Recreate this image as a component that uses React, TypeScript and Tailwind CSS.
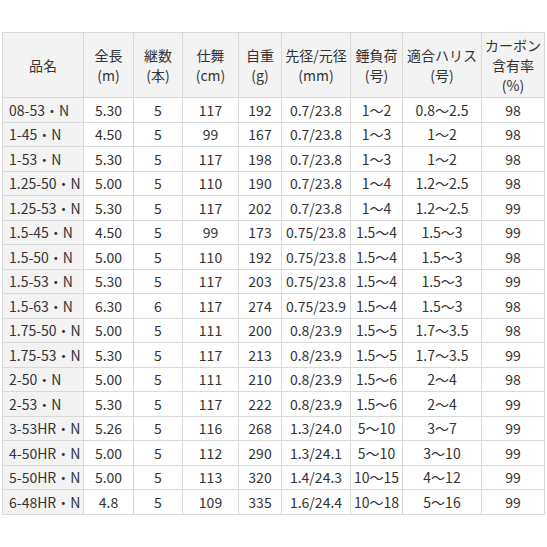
const headers: string[][] = [
  ["品名"],
  ["全長", "(m)"],
  ["継数", "(本)"],
  ["仕舞", "(cm)"],
  ["自重", "(g)"],
  ["先径/元径", "(mm)"],
  ["錘負荷", "(号)"],
  ["適合ハリス", "(号)"],
  ["カーボン", "含有率", "(%)"],
];

const widths = [81, 50, 49, 56, 43, 69, 52, 79, 63];

const rows: string[][] = [
  ["08-53・N", "5.30", "5", "117", "192", "0.7/23.8", "1～2", "0.8～2.5", "98"],
  ["1-45・N", "4.50", "5", "99", "167", "0.7/23.8", "1～3", "1～2", "98"],
  ["1-53・N", "5.30", "5", "117", "198", "0.7/23.8", "1～3", "1～2", "98"],
  ["1.25-50・N", "5.00", "5", "110", "190", "0.7/23.8", "1～4", "1.2～2.5", "98"],
  ["1.25-53・N", "5.30", "5", "117", "202", "0.7/23.8", "1～4", "1.2～2.5", "99"],
  ["1.5-45・N", "4.50", "5", "99", "173", "0.75/23.8", "1.5～4", "1.5～3", "99"],
  ["1.5-50・N", "5.00", "5", "110", "192", "0.75/23.8", "1.5～4", "1.5～3", "98"],
  ["1.5-53・N", "5.30", "5", "117", "203", "0.75/23.8", "1.5～4", "1.5～3", "99"],
  ["1.5-63・N", "6.30", "6", "117", "274", "0.75/23.9", "1.5～4", "1.5～3", "98"],
  ["1.75-50・N", "5.00", "5", "111", "200", "0.8/23.9", "1.5～5", "1.7～3.5", "98"],
  ["1.75-53・N", "5.30", "5", "117", "213", "0.8/23.9", "1.5～5", "1.7～3.5", "99"],
  ["2-50・N", "5.00", "5", "111", "210", "0.8/23.9", "1.5～6", "2～4", "98"],
  ["2-53・N", "5.30", "5", "117", "222", "0.8/23.9", "1.5～6", "2～4", "99"],
  ["3-53HR・N", "5.26", "5", "116", "268", "1.3/24.0", "5～10", "3～7", "99"],
  ["4-50HR・N", "5.00", "5", "112", "290", "1.3/24.1", "5～10", "3～10", "99"],
  ["5-50HR・N", "5.00", "5", "113", "320", "1.4/24.3", "10～15", "4～12", "99"],
  ["6-48HR・N", "4.8", "5", "109", "335", "1.6/24.4", "10～18", "5～16", "99"],
];

export default function App() {
  return (
    <div className="h-[547px] w-[547px] bg-white pl-[2px] pt-[32px] font-['Noto_Sans_CJK_JP',sans-serif] text-[14px] text-[#333333]">
      <table className="w-[542px] table-fixed border-collapse">
        <colgroup>
          {widths.map((w, i) => (
            <col key={i} style={{ width: w }} />
          ))}
        </colgroup>
        <thead>
          <tr className="h-[65px]">
            {headers.map((lines, i) => (
              <th
                key={i}
                className="border border-[#d9d9d9] bg-[#f3f3f3] p-0 text-center align-middle font-normal leading-[20px] whitespace-nowrap"
              >
                {lines.map((l, j) => (
                  <div key={j}>{l}</div>
                ))}
              </th>
            ))}
          </tr>
        </thead>
        <tbody>
          {rows.map((row, r) => (
            <tr key={r} className="h-[24.5px]">
              {row.map((cell, c) =>
                c === 0 ? (
                  <td
                    key={c}
                    className="border border-[#d9d9d9] bg-[#f3f3f3] py-0 pl-[6px] pr-0 text-left leading-[20px] whitespace-nowrap"
                  >
                    {cell}
                  </td>
                ) : (
                  <td
                    key={c}
                    className="border border-[#d9d9d9] p-0 text-center leading-[20px] whitespace-nowrap"
                  >
                    {cell}
                  </td>
                )
              )}
            </tr>
          ))}
        </tbody>
      </table>
    </div>
  );
}
